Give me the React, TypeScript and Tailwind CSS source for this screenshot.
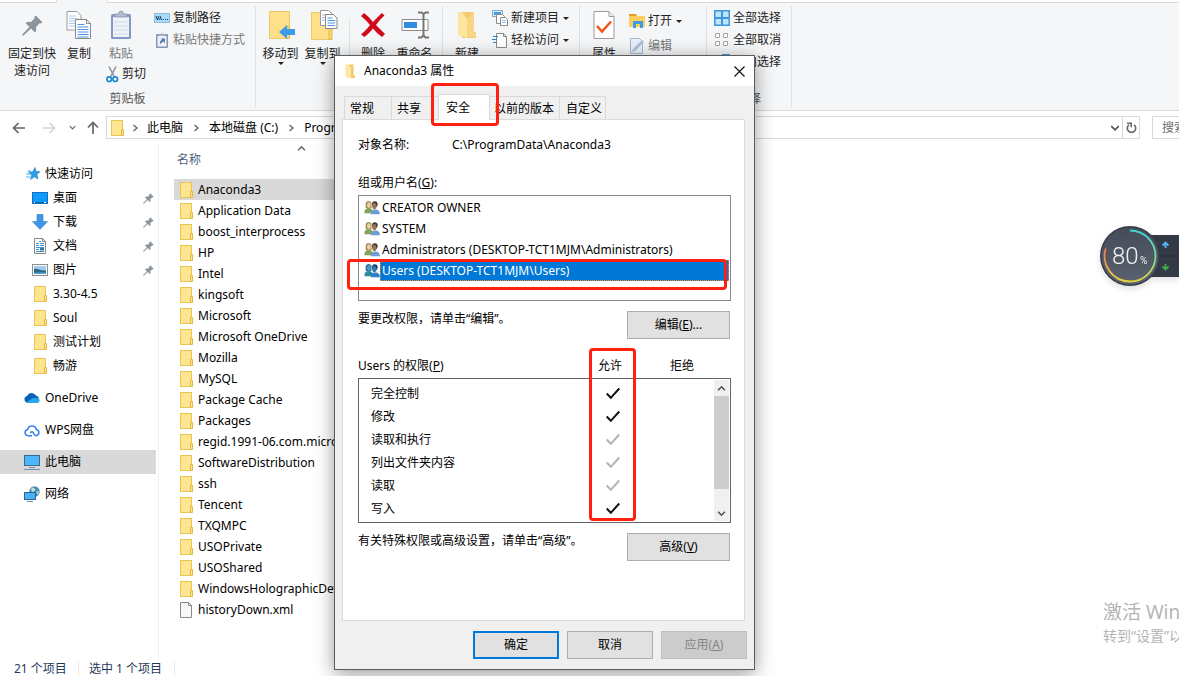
import type { ReactNode } from "react";

function FolderIcon() {
  return (
    <svg width="14" height="16" viewBox="0 0 14 16" className="shrink-0" aria-hidden="true">
      <rect x="0.5" y="0.5" width="11" height="15" fill="#ffe492" stroke="#e9c650" />
      <path d="M10.5 9.5h2v6h-2z" fill="#ffe492" stroke="#e5b93c" />
    </svg>
  );
}

function FileIcon() {
  return (
    <svg width="14" height="16" viewBox="0 0 14 16" className="shrink-0" aria-hidden="true">
      <path d="M0.5 0.5h8l3 3v12h-11z" fill="#f7f8f9" stroke="#8a8a8a" />
      <path d="M8.5 0.5v3h3" fill="none" stroke="#8a8a8a" />
    </svg>
  );
}

function PinIcon({ size }: { size: number }) {
  return (
    <svg width={size} height={size} viewBox="0 0 20 20" className="shrink-0" aria-hidden="true">
      <path
        d="M13 0.5 19.5 7l-1.5 1.2-1.2-.3-3.6 3.8c.7 2 .3 3.800-.8 5L8.600 12.900 1.500 19.500.400 19.600.500 18.400 7 11.400 3.400 7.700c1.300-1.200 3-1.500 5-.9L12 3.200 11.800 1.700z"
        fill="#8c959c"
      />
    </svg>
  );
}

function Chevron({ dir, size = 8, color = "#666" }: { dir: "right" | "down" | "up"; size?: number; color?: string }) {
  const d = { right: "M2.500 1 6 4 2.500 7", down: "M1 2.500 4 5.500 7 2.500", up: "M1 5.500 4 2.500 7 5.500" }[dir];
  return (
    <svg width={size} height={size} viewBox="0 0 8 8" className="shrink-0" aria-hidden="true">
      <path d={d} fill="none" stroke={color} strokeWidth="1.400" />
    </svg>
  );
}

function Caret() {
  return (
    <svg width="6" height="3" viewBox="0 0 6 3" className="shrink-0" aria-hidden="true">
      <path d="M0 0h6L3 3z" fill="#222" />
    </svg>
  );
}

const copyIcon = (
  <svg width="26" height="30" viewBox="0 0 26 30" aria-hidden="true">
    <path d="M1 1.500h10l4 4v14.500H1z" fill="#fff" stroke="#9a9a9a" />
    <path d="M3 6h7M3 8.500h9M3 11h9M3 13.500h9M3 16h9" stroke="#a8c8f0" />
    <path d="M9.500 9.500h11l4 4v15h-15z" fill="#fff" stroke="#8a8a8a" />
    <path d="M20.500 9.500v4h4" fill="none" stroke="#8a8a8a" />
    <path d="M11.500 14.500h7M11.500 17h11M11.500 19.500h11M11.500 22h11M11.500 24.500h11M11.500 27h11" stroke="#4d94e8" strokeWidth="1.200" />
  </svg>
);

const pasteIcon = (
  <svg width="22" height="30" viewBox="0 0 22 30" aria-hidden="true">
    <rect x="1" y="4" width="20" height="25" rx="1.500" fill="#8199c4" />
    <rect x="3" y="7" width="16" height="20" fill="#eef3fa" />
    <path d="M4 12h14M4 16h14M4 20h14M4 24h14" stroke="#cfdaea" />
    <path d="M5 7V4h3.500a2.500 3 0 0 1 5 0H17v3z" fill="#b4bccb" stroke="#8a97ad" strokeWidth="0.800" />
  </svg>
);

const moveIcon = (
  <svg width="28" height="30" viewBox="0 0 28 30" aria-hidden="true">
    <path d="M1.500 1.500h20v27h-20z" fill="#ffe08a" stroke="#ecca63" />
    <path d="M18.500 16.500h3v12h-3z" fill="#f8d56f" stroke="#e2b84c" />
    <path d="M11 22l8-7v4h8v6h-8v4z" fill="#3d9be9" />
  </svg>
);

const copyToIcon = (
  <svg width="28" height="32" viewBox="0 0 28 32" aria-hidden="true">
    <path d="M1.500 3.500h20v27h-20z" fill="#ffe08a" stroke="#ecca63" />
    <path d="M19 19h3v11.500h-3z" fill="#f8d56f" stroke="#e2b84c" />
    <path d="M10.500 1.500h8l3 3v12h-11z" fill="#fff" stroke="#9a9a9a" />
    <path d="M12 6h6M12 8.500h7M12 11h7" stroke="#8dbbf0" />
    <path d="M15.500 5.500h8l3.500 3.500v10.500H15.500z" fill="#fff" stroke="#8a8a8a" />
    <path d="M17.500 9h5M17.500 11.500h7.500M17.500 14h7.500M17.500 16.500h7.500" stroke="#4d94e8" />
  </svg>
);

const deleteIcon = (
  <svg width="26" height="26" viewBox="0 0 26 26" aria-hidden="true">
    <path d="M1 4 4 1c4 3 6 5.500 9 9 3-3.500 6-6.500 9-9l2.500 2.500c-3.500 3-6 6-8.500 9.500 3 3 5.500 5.500 9 9L22 25c-3.500-2.500-6-5-9-8.500C10 20 8 22 4.500 25L1 22.500c4-3.500 6.500-6 9-9.500C7 9.500 4.500 7 1 4z" fill="#d0091b" />
  </svg>
);

const renameIcon = (
  <svg width="28" height="28" viewBox="0 0 28 28" aria-hidden="true">
    <path d="M1 8.500h26v11H1z" fill="#fff" stroke="#8c8c8c" />
    <rect x="3" y="11" width="13" height="6" fill="#2f8ddf" />
    <path d="M17 1.500h3.500l2 1.500 2-1.500H28M22.500 3v21M17 26.500h3.500l2-2 2 2H28" fill="none" stroke="#777" strokeWidth="2" />
  </svg>
);

const newFolderIcon = (
  <svg width="20" height="28" viewBox="0 0 20 28" aria-hidden="true">
    <path d="M5 1h12v19l2 2v5H5z" fill="#f4cb6c" />
    <path d="M1 1h4l5 7v19l-9-3z" fill="#ffe6a0" />
    <path d="M10 8l7-7v19l2 2v4h-9z" fill="#f8d684" />
  </svg>
);

const propertiesIcon = (
  <svg width="22" height="28" viewBox="0 0 22 28" aria-hidden="true">
    <path d="M1 0.500h15l5 5v22H1z" fill="#fff" stroke="#999" />
    <path d="M16 0.500v5h5" fill="#eee" stroke="#999" />
    <path d="M4 15l5 5.500 9-10" fill="none" stroke="#f2581b" strokeWidth="2.600" />
  </svg>
);

const copyPathIcon = (
  <svg width="16" height="16" viewBox="0 0 16 16" aria-hidden="true">
    <rect x="0.500" y="3.500" width="15" height="9" fill="#a9dcfb" stroke="#8fbbd8" />
    <path d="M2 6l1.500 4M4 6l1.500 4M6 6l1.500 4M3.500 10V8M8.500 9.500h1M11 9.500h1M13 9.500h1" stroke="#143a60" fill="none" />
  </svg>
);

const pasteShortcutIcon = (
  <svg width="16" height="16" viewBox="0 0 16 16" aria-hidden="true">
    <rect x="2" y="2" width="12" height="14" rx="1" fill="#8199bd" />
    <rect x="3.500" y="4" width="9" height="10.500" fill="#eef2f8" />
    <path d="M5 4V2h2l1-1.500L9 2h2v2z" fill="#a5afc0" />
    <path d="M6 12V9.500l2-2L6.500 6.500H11V11L9.500 9.500z" fill="#5d7ba8" />
  </svg>
);

const cutIcon = (
  <svg width="13" height="17" viewBox="0 0 13 17" aria-hidden="true">
    <path d="M3 0.500 8.500 11M10 0.500 4.500 11" stroke="#8b96a2" strokeWidth="1.600" />
    <circle cx="3.200" cy="13.200" r="2.300" fill="none" stroke="#1c86d1" strokeWidth="1.700" />
    <circle cx="9.200" cy="13.200" r="2.300" fill="none" stroke="#1c86d1" strokeWidth="1.700" />
  </svg>
);

const newItemIcon = (
  <svg width="16" height="16" viewBox="0 0 16 16" aria-hidden="true">
    <path d="M0.500 0.500h10v6h-10z" fill="#dff1fd" stroke="#7fa8c4" />
    <path d="M2 2h7v3H2z" fill="#3f9de0" />
    <path d="M4.500 4.500h6l2 2v7h-8z" fill="#fff" stroke="#8a8a8a" />
    <path d="M8.500 7.500h5l2 2v6h-7z" fill="#fff" stroke="#8a8a8a" />
    <path d="M10 10.500h4M10 12.500h4" stroke="#8fc0ee" />
  </svg>
);

const easyAccessIcon = (
  <svg width="16" height="16" viewBox="0 0 16 16" aria-hidden="true">
    <path d="M4.500 1.500h7l3 3v11h-10z" fill="#fff" stroke="#8a8a8a" />
    <path d="M11.500 1.500v3h3" fill="none" stroke="#8a8a8a" />
    <path d="M1 4.500h5M0 7.500h5M1 10.500h4" stroke="#2b86d4" strokeWidth="1.200" />
  </svg>
);

const openIcon = (
  <svg width="16" height="16" viewBox="0 0 16 16" aria-hidden="true">
    <path d="M0 1h7l1 2h-8z" fill="#e0a024" />
    <path d="M0 3h16v11H0z" fill="#fcd05c" />
    <path d="M4 15V8h10v7h-3v-4H7v4z" fill="#3c9be6" />
  </svg>
);

const editIcon = (
  <svg width="16" height="16" viewBox="0 0 16 16" aria-hidden="true">
    <path d="M1.500 0.500h9l3 3v12h-12z" fill="#e9eff8" stroke="#a9b8cf" />
    <path d="M3 14l1-3 9-9 2 2-9 9z" fill="#aebfda" />
  </svg>
);

const selectAllIcon = (
  <svg width="16" height="16" viewBox="0 0 16 16" aria-hidden="true">
    <rect width="16" height="16" fill="#3b97e0" />
    <path d="M1.500 1.500h5.500v5.500H1.500zM9 1.500h5.500v5.500H9zM1.500 9h5.500v5.500H1.500zM9 9h5.500v5.500H9z" fill="#bfe3fb" />
  </svg>
);

const selectNoneIcon = (
  <svg width="16" height="16" viewBox="0 0 16 16" aria-hidden="true">
    <path d="M1.500 1.500h4v4h-4zM9.500 1.500h4v4h-4zM1.500 9.500h4v4h-4zM9.500 9.500h4v4h-4z" fill="#fff" stroke="#a5a5a5" />
  </svg>
);

const invertIcon = (
  <svg width="16" height="16" viewBox="0 0 16 16" aria-hidden="true">
    <path d="M1.500 1.500h4v4h-4zM9.500 9.500h4v4h-4z" fill="#fff" stroke="#a5a5a5" />
    <path d="M8 0h8v8H8zM0 8h8v8H0z" fill="#3b97e0" />
  </svg>
);

function BigButton({ icon, children, caret, muted, width }: { icon: ReactNode; children: ReactNode; caret?: boolean; muted?: boolean; width: string }) {
  return (
    <button className={`flex shrink-0 flex-col items-center ${width} ${muted ? "text-[#777]" : "text-[#222]"}`}>
      <span className="flex h-9 items-center pt-0.5">{icon}</span>
      <span className="pt-[3px] leading-[17px] whitespace-nowrap">{children}</span>
      {caret && <Caret />}
    </button>
  );
}

function SmallButton({ icon, children, caret, muted }: { icon: ReactNode; children: ReactNode; caret?: boolean; muted?: boolean }) {
  return (
    <button className={`flex h-[22px] items-center gap-[3px] whitespace-nowrap ${muted ? "text-[#777]" : "text-[#222]"}`}>
      {icon}
      <span>{children}</span>
      {caret && <span className="pl-px"><Caret /></span>}
    </button>
  );
}

function RibbonGroup({ label, width, children }: { label: string; width: string; children: ReactNode }) {
  return (
    <section className={`flex shrink-0 flex-col border-r border-[#dfe1e4] ${width}`}>
      <div className="flex h-[85px] items-start">{children}</div>
      <div className="text-center leading-4 text-[#555]">{label}</div>
    </section>
  );
}

function Ribbon() {
  return (
    <header className="flex h-[111px] shrink-0 flex-col border-b border-[#dadbdc] bg-[#f5f6f7]">
      <div className="flex h-[3px] shrink-0">
        <div className="w-[57px] border-r border-b border-[#dadbdc] bg-white" />
        <div className="w-[50px]" />
        <div className="flex-1 border-b border-l border-[#dadbdc] bg-white" />
      </div>
      <div className="flex pt-[3px]">
        <RibbonGroup label="剪贴板" width="w-[256px]">
          <div className="flex pl-1.5">
            <BigButton width="w-[52px]" icon={<PinIcon size={21} />}>固定到快<br />速访问</BigButton>
            <BigButton width="w-[42px]" icon={copyIcon}>复制</BigButton>
            <div className="flex flex-col">
              <div className="flex">
                <BigButton width="w-[42px]" icon={pasteIcon} muted>粘贴</BigButton>
                <div className="pt-px pl-3">
                  <SmallButton icon={copyPathIcon}>复制路径</SmallButton>
                  <SmallButton icon={pasteShortcutIcon} muted>粘贴快捷方式</SmallButton>
                </div>
              </div>
              <div className="pt-px pl-1.5">
                <SmallButton icon={cutIcon}>剪切</SmallButton>
              </div>
            </div>
          </div>
        </RibbonGroup>
        <RibbonGroup label="组织" width="w-[187px]">
          <div className="flex pl-[3px]">
            <BigButton width="w-[43px]" icon={<span className="pl-[3px]">{moveIcon}</span>} caret>移动到</BigButton>
            <BigButton width="w-[41px]" icon={<span className="pl-[3px]">{copyToIcon}</span>} caret>复制到</BigButton>
            <div className="mt-3 ml-1.5 h-[72px] w-px bg-[#dfe1e4]" />
            <BigButton width="w-[46px]" icon={deleteIcon}>删除</BigButton>
            <BigButton width="w-[37px]" icon={renameIcon}>重命名</BigButton>
          </div>
        </RibbonGroup>
        <RibbonGroup label="新建" width="w-[137px]">
          <div className="flex pl-1">
            <BigButton width="w-[40px]" icon={newFolderIcon}>新建</BigButton>
            <div className="pt-px pl-[5px]">
              <SmallButton icon={newItemIcon} caret>新建项目</SmallButton>
              <SmallButton icon={easyAccessIcon} caret>轻松访问</SmallButton>
            </div>
          </div>
        </RibbonGroup>
        <RibbonGroup label="打开" width="w-[127px]">
          <div className="flex pl-1">
            <BigButton width="w-[40px]" icon={propertiesIcon}>属性</BigButton>
            <div className="flex flex-col gap-[3px] pt-1 pl-[5px]">
              <SmallButton icon={openIcon} caret>打开</SmallButton>
              <SmallButton icon={editIcon} muted>编辑</SmallButton>
            </div>
          </div>
        </RibbonGroup>
        <RibbonGroup label="选择" width="w-[85px]">
          <div className="pt-px pl-[7px]">
            <SmallButton icon={selectAllIcon}>全部选择</SmallButton>
            <SmallButton icon={selectNoneIcon}>全部取消</SmallButton>
            <SmallButton icon={invertIcon}>反向选择</SmallButton>
          </div>
        </RibbonGroup>
      </div>
    </header>
  );
}

function Arrow({ rotate, color }: { rotate: string; color: string }) {
  return (
    <svg width="14" height="14" viewBox="0 0 14 14" className={rotate} aria-hidden="true">
      <path d="M13 7H2M6.500 2 1.500 7l5 5" fill="none" stroke={color} strokeWidth="1.700" />
    </svg>
  );
}

function AddressBar() {
  return (
    <nav className="flex h-[33px] shrink-0 items-center overflow-hidden">
      <div className="flex w-[106px] shrink-0 items-center pl-3">
        <button aria-label="后退"><Arrow rotate="rotate-0" color="#666" /></button>
        <button aria-label="前进" className="pl-4"><Arrow rotate="rotate-180" color="#d5d5d5" /></button>
        <button aria-label="最近" className="pl-[13px]"><Chevron dir="down" size={7} /></button>
        <button aria-label="向上" className="pl-2.5"><Arrow rotate="rotate-90" color="#666" /></button>
      </div>
      <div className="flex h-[23px] min-w-0 flex-1 items-center border border-[#d9d9d9] pl-1 whitespace-nowrap">
        <FolderIcon />
        <span className="pl-1.5"><Chevron dir="right" /></span>
        <a href="#pc" className="pl-2">此电脑</a>
        <span className="pl-[9px]"><Chevron dir="right" /></span>
        <a href="#c" className="pl-[9px]">本地磁盘 (C:)</a>
        <span className="pl-[9px]"><Chevron dir="right" /></span>
        <a href="#pd" className="pl-[9px]">ProgramData</a>
        <span className="flex-1" />
        <button aria-label="展开" className="pr-0.5"><Chevron dir="down" size={10} color="#555" /></button>
        <button aria-label="刷新" className="flex h-full w-[17px] items-center justify-center border-l border-[#d9d9d9]">
          <svg width="11" height="12" viewBox="0 0 11 12" aria-hidden="true">
            <path d="M8 2.800A4.200 4.200 0 1 1 3 2.800" fill="none" stroke="#666" strokeWidth="1.600" />
            <path d="M1 1.200h4.200v4" fill="none" stroke="#666" strokeWidth="1.600" />
          </svg>
        </button>
      </div>
      <div className="ml-3 h-[23px] w-[27px] shrink-0 overflow-hidden border-y border-l border-[#d9d9d9]">
        <input aria-label="搜索" placeholder="搜索" className="h-full w-[60px] pl-[9px] outline-none placeholder:text-[#6d6d6d]" />
      </div>
    </nav>
  );
}

const starIcon = (
  <svg width="16" height="14" viewBox="0 0 16 14" aria-hidden="true">
    <path d="M9 0.500l1 4 4 .3-3.200 2.500 1.200 4.700-3.600-2.200-3.800 2.700 1.200-4.300L2.500 5h4.200z" fill="#2ba1e6" stroke="#1379c4" strokeWidth="0.600" />
    <path d="M1.500 4h3.500M0 7h5M0 10h4.500" stroke="#4fb2ee" strokeWidth="1" />
  </svg>
);
const desktopIcon = (
  <svg width="16" height="16" viewBox="0 0 16 16" aria-hidden="true">
    <rect x="0.500" y="2.500" width="15" height="11" fill="#0f9bfb" stroke="#1273bd" />
    <path d="M1 12.500h14" stroke="#0b5fa5" />
    <path d="M2 12.500h1M12 12.500h2" stroke="#fff" />
  </svg>
);
const downloadIcon = (
  <svg width="16" height="16" viewBox="0 0 16 16" aria-hidden="true">
    <path d="M5 0.500h6v7h4.500L8 15.500.500 7.500H5z" fill="#3d96e6" stroke="#2f7fcb" strokeWidth="0.600" />
  </svg>
);
const documentIcon = (
  <svg width="16" height="16" viewBox="0 0 16 16" aria-hidden="true">
    <path d="M2.500 0.500h8l3 3v12h-11z" fill="#fff" stroke="#858585" />
    <path d="M10.500 0.500v3h3" fill="none" stroke="#858585" />
    <path d="M7 3.500h2M4 5.500h3M8 5.500h4M4 7.500h3M8 7.500h4M4 9.500h8M4 11.500h3M4 13.500h8" stroke="#3d8fd0" />
    <path d="M8 10h4v2.500H8z" fill="#2f78ad" />
  </svg>
);
const pictureIcon = (
  <svg width="16" height="16" viewBox="0 0 16 16" aria-hidden="true">
    <rect x="0.500" y="2.500" width="15" height="11" fill="#fff" stroke="#8d8d8d" />
    <path d="M2 4h12v8H2z" fill="#9fcdf2" />
    <path d="M2 7c4-1 6 2 12 1.500V12H2z" fill="#2e6689" />
    <path d="M2 10.500c4 .5 8-1 12 0V12H2z" fill="#4f9dd9" />
  </svg>
);
const oneDriveIcon = (
  <svg width="16" height="12" viewBox="0 0 16 12" aria-hidden="true">
    <path d="M3.500 10.500A3.300 3.300 0 0 1 3 4a5 5 0 0 1 9-.5A3.800 3.800 0 0 1 13 10.500z" fill="#0a64b5" />
    <path d="M2 10.500 9 6l5 .2a2.500 2.500 0 0 1-.5 4.800h-10z" fill="#2aa5ef" />
  </svg>
);
const wpsIcon = (
  <svg width="16" height="13" viewBox="0 0 16 13" aria-hidden="true">
    <path d="M8 11.800H4a3.200 3.200 0 0 1-.4-6.300 4.500 4.500 0 0 1 8.800 0 3.200 3.200 0 0 1-.4 6.300c-2 0-2-4-4-4-1 0-1.500.7-1.500 1.500" fill="none" stroke="#3c82f0" strokeWidth="1.600" />
  </svg>
);
const computerIcon = (
  <svg width="16" height="16" viewBox="0 0 16 16" aria-hidden="true">
    <rect x="0.500" y="1.500" width="15" height="10" fill="#4db5fa" stroke="#396a92" />
    <path d="M5 13.500h6M0 15.500h16" stroke="#7090ad" />
  </svg>
);
const networkIcon = (
  <svg width="16" height="16" viewBox="0 0 16 16" aria-hidden="true">
    <circle cx="10.500" cy="5.500" r="5.200" fill="#4b8fb0" />
    <path d="M7 3c2-2 3-1 4 0s-1 3-3 3zM12 6l3-1-1 4z" fill="#b9dbe4" />
    <rect x="0.500" y="6.500" width="11" height="7" fill="#47b0f7" stroke="#2b658f" />
    <path d="M3 15.500h6" stroke="#7090ad" />
  </svg>
);

const quickItems: { name: string; icon: ReactNode; pinned?: boolean }[] = [
  { name: "桌面", icon: desktopIcon, pinned: true },
  { name: "下载", icon: downloadIcon, pinned: true },
  { name: "文档", icon: documentIcon, pinned: true },
  { name: "图片", icon: pictureIcon, pinned: true },
  { name: "3.30-4.5", icon: <FolderIcon /> },
  { name: "Soul", icon: <FolderIcon /> },
  { name: "测试计划", icon: <FolderIcon /> },
  { name: "畅游", icon: <FolderIcon /> },
];

const rootItems = [
  { name: "OneDrive", icon: oneDriveIcon, selected: false },
  { name: "WPS网盘", icon: wpsIcon, selected: false },
  { name: "此电脑", icon: computerIcon, selected: true },
  { name: "网络", icon: networkIcon, selected: false },
];

function Sidebar() {
  return (
    <aside className="w-[159px] shrink-0 border-r border-[#f0f0f0] pt-[18px] pr-0.5">
      <a href="#quick" className="flex h-6 items-center gap-[3px] pl-[26px]">{starIcon}快速访问</a>
      {quickItems.map((item) => (
        <a key={item.name} href={`#${item.name}`} className="flex h-6 items-center pl-8">
          <span className="flex w-[21px]"><span className="flex w-4 justify-end">{item.icon}</span></span>
          <span className="flex-1">{item.name}</span>
          {item.pinned && <span className="pr-0.5"><PinIcon size={11} /></span>}
        </a>
      ))}
      <div className="flex flex-col gap-2 pt-2">
        {rootItems.map((item) => (
          <a key={item.name} href={`#${item.name}`} className={`flex h-6 items-center gap-[5px] pl-6 ${item.selected ? "bg-[#d9d9d9]" : ""}`}>
            {item.icon}
            {item.name}
          </a>
        ))}
      </div>
    </aside>
  );
}

const files = [
  "Anaconda3", "Application Data", "boost_interprocess", "HP", "Intel", "kingsoft", "Microsoft",
  "Microsoft OneDrive", "Mozilla", "MySQL", "Package Cache", "Packages",
  "regid.1991-06.com.microsoft", "SoftwareDistribution", "ssh", "Tencent", "TXQMPC", "USOPrivate",
  "USOShared", "WindowsHolographicDevices", "historyDown.xml",
];

function FileList() {
  return (
    <main className="min-w-0 flex-1 pl-[15px]">
      <div className="flex h-[35px] w-[252px] flex-col pl-[3px]">
        <div className="flex h-2 justify-center"><Chevron dir="up" size={9} /></div>
        <div className="leading-4 text-[#4c607a]">名称</div>
      </div>
      <ul>
        {files.map((name, i) => (
          <li key={name} className={`flex h-[21px] w-[250px] items-center gap-1 pl-1.5 whitespace-nowrap ${i === 0 ? "bg-[#d9d9d9]" : ""}`}>
            {name.endsWith(".xml") ? <FileIcon /> : <FolderIcon />}
            {name}
          </li>
        ))}
      </ul>
    </main>
  );
}

function PeopleIcon({ selected }: { selected?: boolean }) {
  const [hair, face, left, hair2, face2, right] = selected
    ? ["#2f6f9c", "#4f9fc4", "#2f8ba0", "#123f6b", "#2f78ad", "#2f7fc9"]
    : ["#a58b54", "#ecd3ae", "#82a457", "#3d3a38", "#9c7350", "#6f9bd0"];
  return (
    <svg width="16" height="15" viewBox="0 0 17 15" className="shrink-0" aria-hidden="true">
      <path d="M0.500 13.500C0 10 2.500 8 5 8s5 1.500 4.500 5.500z" fill={left} />
      <path d="M1.800 8V3.500C1.800-.5 8-.5 8 3.500V8z" fill={hair} />
      <ellipse cx="5.200" cy="5" rx="1.900" ry="3" fill={face} />
      <path d="M7 14.800C7 11 9 9.500 12 9.500s5 1.500 4.800 5.300z" fill={right} />
      <ellipse cx="11.500" cy="4" rx="3" ry="3.200" fill={hair2} />
      <ellipse cx="11" cy="6" rx="2.200" ry="3.400" fill={face2} />
    </svg>
  );
}

const principals = ["CREATOR OWNER", "SYSTEM", "Administrators (DESKTOP-TCT1MJM\\Administrators)", "Users (DESKTOP-TCT1MJM\\Users)"];

const permissions = [
  { name: "完全控制", inherited: false },
  { name: "修改", inherited: false },
  { name: "读取和执行", inherited: true },
  { name: "列出文件夹内容", inherited: true },
  { name: "读取", inherited: true },
  { name: "写入", inherited: false },
];

const tabs = [
  { name: "常规", style: "h-[23px] w-[48px] border-x pl-[5px] pt-0.5" },
  { name: "共享", style: "h-[23px] w-[46px] pl-[5px] pt-0.5" },
  { name: "安全", style: "z-10 -mb-px h-[26px] w-[52px] border-x bg-white pl-[7px]" },
  { name: "以前的版本", style: "h-[23px] w-[70px] border-r pl-1 pt-0.5" },
  { name: "自定义", style: "h-[23px] w-[46px] border-r pl-1.5 pt-0.5" },
];

function DialogButton({ children, width, look = "border border-[#adadad] bg-[#e1e1e1]", disabled }: { children: ReactNode; width: string; look?: string; disabled?: boolean }) {
  return (
    <button disabled={disabled} className={`h-7 shrink-0 ${width} ${look}`}>{children}</button>
  );
}

function PermissionTable() {
  return (
    <div className="mt-1 flex h-[145px] w-[373px] border border-[#646464] p-px pl-0">
      <div className="flex-1">
        <table aria-label="Users 的权限" className="mt-[2px] w-full table-fixed border-collapse">
          <tbody>
            {permissions.map((p) => (
              <tr key={p.name} className="h-[23px]">
                <td className="w-[220px] p-0 pl-3">{p.name}</td>
                <td className="w-[68px] p-0">
                  <label className="grid place-items-center">
                    <input type="checkbox" defaultChecked disabled={p.inherited} aria-label={`允许${p.name}`} className="col-start-1 row-start-1 size-[14px] appearance-none" />
                    <svg width="14" height="13" viewBox="0 0 14 13" className="col-start-1 row-start-1" aria-hidden="true">
                      <path d="M0.700 6.500 4.800 10.800 13.300 1.500" fill="none" stroke={p.inherited ? "#b4b4b4" : "#111"} strokeWidth="2" />
                    </svg>
                  </label>
                </td>
                <td className="p-0" />
              </tr>
            ))}
          </tbody>
        </table>
      </div>
      <div className="flex w-[15px] flex-col items-center bg-[#f0f0f0]">
        <div className="flex h-4 items-center"><Chevron dir="up" size={9} color="#505050" /></div>
        <div className="h-[93px] w-full bg-[#cdcdcd]" />
        <div className="flex-1" />
        <div className="flex h-4 items-center"><Chevron dir="down" size={9} color="#505050" /></div>
      </div>
    </div>
  );
}

function PropertiesDialog() {
  return (
    <div role="dialog" aria-label="Anaconda3 属性" className="absolute top-[55px] left-[334px] w-[421px] border border-[#5c5c5c] bg-[#f0f0f0] pb-2.5 shadow-[0_4px_18px_rgba(0,0,0,0.4)]">
      <div className="flex h-[30px] items-center bg-white pr-[9px] pl-2.5">
        <svg width="10" height="15" viewBox="0 0 10 15" aria-hidden="true">
          <path d="M0.500 0.500h3l3 3V14.500l-6-1.500z" fill="#ffe8a4" />
          <path d="M3.500 0.500h5v10l1.500 1.500v2H6V3.500z" fill="#f3ca68" />
        </svg>
        <h1 className="flex-1 pl-[9px]">Anaconda3 属性</h1>
        <button aria-label="关闭">
          <svg width="11" height="11" viewBox="0 0 11 11" aria-hidden="true">
            <path d="M0.500 0.500l10 10M10.500 0.500l-10 10" stroke="#111" strokeWidth="1.200" />
          </svg>
        </button>
      </div>
      <div role="tablist" className="flex items-end pt-2 pl-[9px]">
        {tabs.map((t) => (
          <button key={t.name} role="tab" aria-selected={t.name === "安全"} className={`border-t border-[#d9d9d9] text-left whitespace-nowrap ${t.style}`}>
            {t.name}
          </button>
        ))}
      </div>
      <div className="mr-[9px] ml-[7px] border border-[#dcdcdc] bg-white pt-[17px] pr-[13px] pb-[59px] pl-[15px]">
        <div className="flex leading-4">
          <span className="w-[94px]">对象名称:</span>
          <span>C:\ProgramData\Anaconda3</span>
        </div>
        <div className="mt-[22px] leading-4">组或用户名(<u>G</u>):</div>
        <ul role="listbox" aria-label="组或用户名" className="mt-1 h-[106px] w-[373px] border border-[#828790] pt-px pr-px pl-[5px]">
          {principals.map((name, i) => (
            <li key={name} role="option" aria-selected={i === 3} className="flex h-[21px] items-center">
              <PeopleIcon selected={i === 3} />
              <span className={`flex h-[21px] flex-1 items-center pl-px whitespace-nowrap ${i === 3 ? "border border-dotted border-[#ff8728] bg-[#0078d7] text-white" : "border border-transparent"}`}>{name}</span>
            </li>
          ))}
        </ul>
        <div className="mt-2.5 flex w-[372px] items-start justify-between leading-4">
          <span>要更改权限，请单击“编辑”。</span>
          <DialogButton width="w-[103px]">编辑(<u>E</u>)...</DialogButton>
        </div>
        <div className="mt-[19px] flex leading-4">
          <span className="w-[218px]">Users 的权限(<u>P</u>)</span>
          <span className="w-[68px] text-center">允许</span>
          <span className="w-[76px] text-center">拒绝</span>
        </div>
        <PermissionTable />
        <div className="mt-2.5 flex w-[372px] items-start justify-between leading-4">
          <span>有关特殊权限或高级设置，请单击“高级”。</span>
          <DialogButton width="w-[103px]">高级(<u>V</u>)</DialogButton>
        </div>
      </div>
      <div className="mt-2.5 flex justify-end gap-2 pr-[7px]">
        <DialogButton width="w-[86px]" look="border-2 border-[#0078d7] bg-[#e1e1e1]">确定</DialogButton>
        <DialogButton width="w-[86px]">取消</DialogButton>
        <DialogButton width="w-[86px]" look="border border-[#bfbfbf] bg-[#cccccc] text-[#838383]" disabled>应用(<u>A</u>)</DialogButton>
      </div>
      <div className="pointer-events-none absolute top-[27px] left-[96px] z-20 h-[43px] w-[68px] rounded-[4px] border-3 border-[#ff2010]" />
      <div className="pointer-events-none absolute top-[203px] left-[12px] z-20 h-[31px] w-[380px] rounded-[4px] border-3 border-[#ff2010]" />
      <div className="pointer-events-none absolute top-[292px] left-[254px] z-20 h-[173px] w-[47px] rounded-[4px] border-3 border-[#ff2010]" />
    </div>
  );
}

function SpeedWidget() {
  return (
    <div className="absolute top-[225px] right-0 flex w-[80px] items-center drop-shadow-md">
      <svg width="80" height="62" viewBox="0 0 80 62" role="img" aria-label="80%">
        <defs>
          <linearGradient id="ring" x1="0" y1="0" x2="0" y2="1">
            <stop offset="0" stopColor="#3fd6dc" />
            <stop offset="0.600" stopColor="#86dc8e" />
            <stop offset="1" stopColor="#e6d23e" />
          </linearGradient>
          <linearGradient id="ringLeft" x1="0" y1="0" x2="0" y2="1">
            <stop offset="0" stopColor="#ee7457" />
            <stop offset="1" stopColor="#e6d23e" />
          </linearGradient>
          <linearGradient id="disc" x1="0" y1="0" x2="0" y2="1">
            <stop offset="0" stopColor="#454b57" />
            <stop offset="1" stopColor="#5b6270" />
          </linearGradient>
        </defs>
        <path d="M50 10h30v42H50z" fill="#343a45" />
        <path d="M55 31h25" stroke="#252a32" />
        <path d="M63.500 20.500 66.500 17.500 69.500 20.500M66.500 18v5" fill="none" stroke="#55b5f5" strokeWidth="1.800" />
        <path d="M63.500 41.500 66.500 44.500 69.500 41.500M66.500 39v5" fill="none" stroke="#3aae49" strokeWidth="1.800" />
        <circle cx="31" cy="31" r="30" fill="#373d48" />
        <circle cx="31" cy="31" r="28.500" fill="url(#disc)" />
        <path d="M31 5.500a25.500 25.500 0 0 1 0 51" fill="none" stroke="url(#ring)" strokeWidth="1.800" />
        <path d="M31 56.500A25.500 25.500 0 0 1 6.700 23.500" fill="none" stroke="url(#ringLeft)" strokeWidth="1.800" />
        <text x="13" y="39" fontSize="24" fontFamily="Roboto, 'Noto Sans', sans-serif" fontWeight="300" fill="#f2f2f2">80</text>
        <text x="41" y="39" fontSize="10" fontFamily="Roboto, 'Noto Sans', sans-serif" fill="#f2f2f2">%</text>
      </svg>
    </div>
  );
}

export default function App() {
  return (
    <div className="relative flex min-h-screen flex-col overflow-hidden bg-white font-['Noto_Sans','Noto_Sans_CJK_SC',sans-serif] text-[12px] leading-4 text-black">
      <Ribbon />
      <AddressBar />
      <div className="flex min-h-0 flex-1">
        <Sidebar />
        <FileList />
      </div>
      <footer className="flex h-[14px] shrink-0 items-center pl-3.5 whitespace-nowrap text-[#1e395b]">
        <span className="w-[65px] border-r border-[#ececec]">21 个项目</span>
        <span className="w-[96px] border-r border-[#ececec] pl-2.5">选中 1 个项目</span>
      </footer>
      <div className="absolute right-0 bottom-[29px] w-[76px] overflow-hidden whitespace-nowrap text-[#b5b5b5]">
        <div className="text-[19px] leading-[26px]">激活 Windows</div>
        <div className="text-[14px] leading-[22px]">转到“设置”以激活 Windows。</div>
      </div>
      <SpeedWidget />
      <PropertiesDialog />
    </div>
  );
}
